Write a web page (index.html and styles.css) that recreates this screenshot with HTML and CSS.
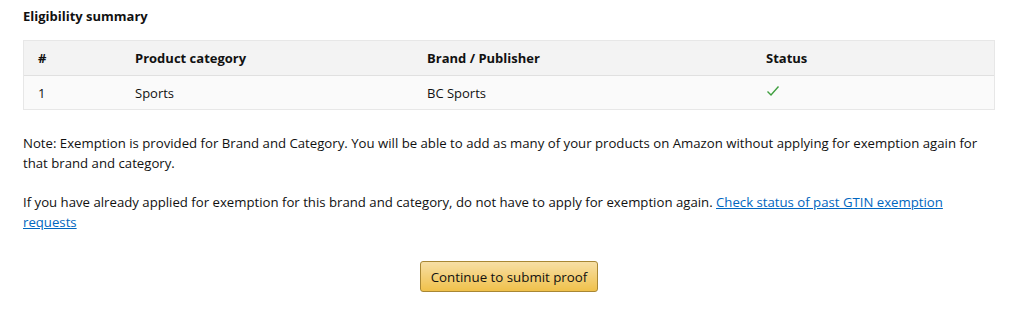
FILE: index.html
```html
<!DOCTYPE html>
<html>
<head>
<meta charset="utf-8">
<link rel="stylesheet" href="styles.css">
</head>
<body>
<div class="page">
  <h2 class="title">Eligibility summary</h2>
  <div class="table">
    <div class="row head">
      <div class="c1">#</div>
      <div class="c2">Product category</div>
      <div class="c3">Brand / Publisher</div>
      <div class="c4">Status</div>
    </div>
    <div class="row body">
      <div class="c1">1</div>
      <div class="c2">Sports</div>
      <div class="c3">BC Sports</div>
      <div class="c4"><svg class="check" width="14" height="12" viewBox="0 0 14 12"><path d="M1.5 6.5 L5 10 L12.5 1.5" fill="none" stroke="#3f9f3f" stroke-width="1.4"/></svg></div>
    </div>
  </div>
  <p class="note">Note: Exemption is provided for Brand and Category. You will be able to add as many of your products on Amazon without applying for exemption again for that brand and category.</p>
  <p class="note">If you have already applied for exemption for this brand and category, do not have to apply for exemption again. <a href="#">Check status of past GTIN exemption requests</a></p>
  <div class="actions">
    <button class="btn">Continue to submit proof</button>
  </div>
</div>
</body>
</html>
```

FILE: styles.css
```css
html, body { margin: 0; padding: 0; background: #fff; }
body { font-family: "Open Sans", "Noto Sans", sans-serif; color: #111; }
.page { padding: 7px 29px 0 23px; width: 972px; }
.title { margin: 0; font-size: 13px; font-weight: 700; line-height: 18px; }
.table { margin-top: 15px; border: 1px solid #e7e7e7; }
.row { display: grid; grid-template-columns: 97px 292px 339px 1fr; align-items: center; font-size: 13px; padding-left: 14px; }
.row.head { height: 34px; background: #f3f3f3; font-weight: 700; border-bottom: 1px solid #e0e0e0; }
.row.body { height: 33px; background: #fafafa; }
.check { display: block; margin-top: -4px; }
.note { margin: 0; margin-top: 24px; font-size: 13.2px; line-height: 19.5px; color: #111; }
.note + .note { margin-top: 20px; }
a { color: #0066c0; text-decoration: underline; }
.actions { display: flex; justify-content: center; margin-top: 29px; }
.btn { font-family: inherit; font-size: 13.3px; color: #111; background: linear-gradient(#f7dfa5, #f0c14b); border: 1px solid #a88734; border-radius: 3px; height: 31px; padding: 0 10px; }
```
